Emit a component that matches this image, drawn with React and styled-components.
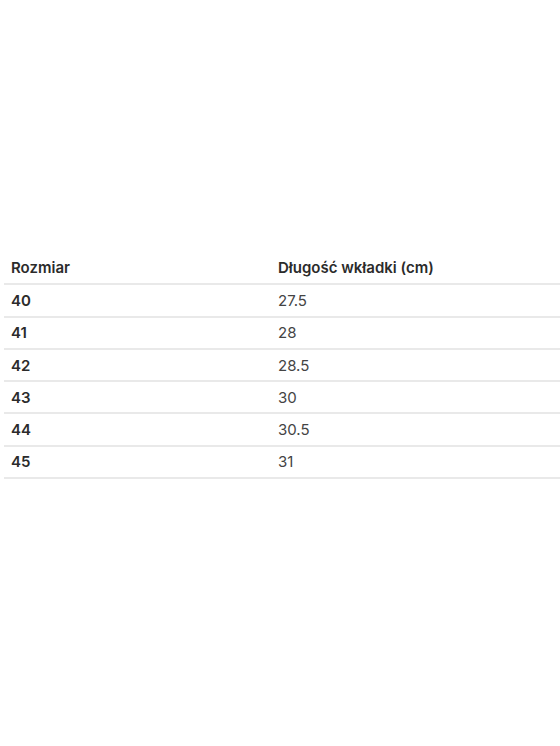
import styled, { createGlobalStyle } from "styled-components";

const Global = createGlobalStyle`
  html, body {
    margin: 0;
    padding: 0;
    background: #fff;
    overflow: hidden;
  }
  body {
    font-family: Inter, "Liberation Sans", sans-serif;
    color: #333;
  }
`;

const Page = styled.div`
  width: 560px;
  height: 746px;
  padding: 252px 0 0 4px;
  box-sizing: border-box;
  overflow: hidden;
`;

const Table = styled.table`
  width: 600px;
  border-collapse: collapse;
  font-size: 15px;
`;

const Row = styled.tr`
  height: 32.3px;
  border-bottom: 2px solid #e9e9e9;
`;

const HeadCell = styled.th`
  text-align: left;
  font-weight: 600;
  color: #2b2b2b;
  padding: 0 0 0 7px;
  width: ${(p) => (p.$first ? "260px" : "auto")};
`;

const Cell = styled.td`
  padding: 0 0 0 7px;
  font-weight: ${(p) => (p.$bold ? 600 : 400)};
  color: ${(p) => (p.$bold ? "#2b2b2b" : "#444")};
`;

const rozmiary = [
  ["40", "27.5"],
  ["41", "28"],
  ["42", "28.5"],
  ["43", "30"],
  ["44", "30.5"],
  ["45", "31"],
];

export default function App() {
  return (
    <>
      <Global />
      <Page>
        <Table>
          <thead>
            <Row>
              <HeadCell $first>Rozmiar</HeadCell>
              <HeadCell>Długość wkładki (cm)</HeadCell>
            </Row>
          </thead>
          <tbody>
            {rozmiary.map(([r, d]) => (
              <Row key={r}>
                <Cell $bold>{r}</Cell>
                <Cell>{d}</Cell>
              </Row>
            ))}
          </tbody>
        </Table>
      </Page>
    </>
  );
}
